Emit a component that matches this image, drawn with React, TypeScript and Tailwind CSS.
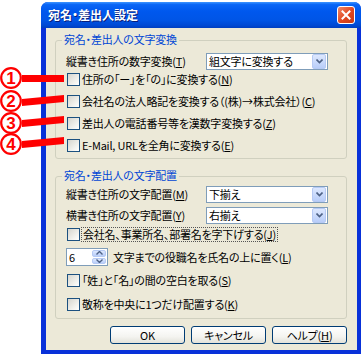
import React from "react";

const M = ({ k }: { k: string }) => (
  <span>
    (<span className="underline underline-offset-[1px]">{k}</span>)
  </span>
);

const CheckBox = () => (
  <div className="w-[13px] h-[13px] shrink-0 border border-[#1C5180] bg-[linear-gradient(135deg,#d6d5ce_0%,#f4f4f0_70%,#ffffff_100%)]" />
);

const Chevron = () => (
  <svg width="7" height="5" viewBox="0 0 7 5">
    <path d="M0.5 0.5 L3.5 3.5 L6.5 0.5" fill="none" stroke="#4D6185" strokeWidth="1.6" />
  </svg>
);

const Select = ({ value }: { value: string }) => (
  <div className="w-[122px] h-[17px] border border-[#7F9DB9] bg-white flex items-center">
    <span className="flex-1 pl-[2px] leading-[13px]">{value}</span>
    <div className="w-[14px] h-[15px] mr-px rounded-[2px] border border-[#B6CAF4] bg-[linear-gradient(180deg,#dde8fe,#b8cdf9)] flex items-center justify-center">
      <Chevron />
    </div>
  </div>
);

const CheckRow = ({ children, focus }: { children: React.ReactNode; focus?: boolean }) => (
  <div className="h-[13px] flex items-center pl-[11px]">
    <CheckBox />
    <span
      className={
        "ml-[2px] leading-[13px] whitespace-nowrap " +
        (focus ? "outline outline-1 outline-dotted outline-[#555] outline-offset-0 px-px" : "")
      }
    >
      {children}
    </span>
  </div>
);

const Group = ({ legend, children, cls }: { legend: string; children: React.ReactNode; cls: string }) => (
  <div className={"relative ml-[9px] mr-[10px] border border-[#D0D0BF] rounded-[3px] " + cls}>
    <span className="absolute -top-[9px] left-[6px] px-[2px] bg-[#ECE9D8] text-[#0046D5] leading-[14px]">
      {legend}
    </span>
    {children}
  </div>
);

const Button = ({ children }: { children: React.ReactNode }) => (
  <div className="w-[75px] h-[18px] shrink-0 rounded-[3px] border border-[#003C74] bg-[linear-gradient(180deg,#ffffff_0%,#f4f4f0_60%,#e3e2da_100%)] flex items-center justify-center leading-[13px]">
    {children}
  </div>
);

export default function App() {
  return (
    <div className="relative w-[362px] h-[355px] bg-white overflow-hidden pt-[2px] font-['Noto_Sans_CJK_JP','Liberation_Sans',sans-serif] text-[11px] tracking-[-0.2px] text-black [font-feature-settings:'palt']">
      {/* window */}
      <div className="ml-[41px] w-[320px] h-[352px] rounded-t-[7px] bg-[#0831D9] flex flex-col overflow-hidden">
        {/* title bar */}
        <div className="h-[26px] shrink-0 flex items-center bg-[linear-gradient(180deg,#3d95ff_0%,#0a66f6_10%,#0058ee_35%,#0055e6_70%,#0049d3_90%,#003fc0_100%)]">
          <span className="ml-[7px] text-white font-bold text-[12px] tracking-normal leading-[14px] [text-shadow:1px_1px_0_#0a1e78]">
            宛名・差出人設定
          </span>
          <div className="ml-auto mr-[6px] w-[18px] h-[18px] rounded-[3px] border border-white bg-[linear-gradient(135deg,#f08a6a,#e0461f_55%,#c73a16)] flex items-center justify-center">
            <svg width="10" height="10" viewBox="0 0 10 10">
              <path d="M1.5 1.5 L8.5 8.5 M8.5 1.5 L1.5 8.5" stroke="white" strokeWidth="2" strokeLinecap="square" />
            </svg>
          </div>
        </div>
        {/* body */}
        <div className="ml-[5px] mr-[4px] mb-[4px] flex-1 bg-[#ECE9D8] flex flex-col">
          <Group legend="宛名・差出人の文字変換" cls="mt-[12px] pt-[12px] pb-[6px]">
            <div className="h-[17px] flex items-center">
              <span className="pl-[10px] w-[150px] whitespace-nowrap leading-[13px]">
                縦書き住所の数字変換<M k="T" />
              </span>
              <Select value="組文字に変換する" />
            </div>
            <div className="mt-[3px] flex flex-col gap-[9px]">
              <CheckRow>
                住所の「ー」を「の」に変換する<M k="N" />
              </CheckRow>
              <CheckRow>
                会社名の法人略記を変換する（(株)→株式会社）<M k="C" />
              </CheckRow>
              <CheckRow>
                差出人の電話番号等を漢数字変換する<M k="Z" />
              </CheckRow>
              <CheckRow>
                E-Mail, URLを全角に変換する<M k="E" />
              </CheckRow>
            </div>
          </Group>

          <Group legend="宛名・差出人の文字配置" cls="mt-[17px] pt-[9px] pb-[7px]">
            <div className="flex flex-col gap-[4px]">
              <div className="h-[17px] flex items-center">
                <span className="pl-[10px] w-[150px] whitespace-nowrap leading-[13px]">
                  縦書き住所の文字配置<M k="M" />
                </span>
                <Select value="下揃え" />
              </div>
              <div className="h-[17px] flex items-center">
                <span className="pl-[10px] w-[150px] whitespace-nowrap leading-[13px]">
                  横書き住所の文字配置<M k="Y" />
                </span>
                <Select value="右揃え" />
              </div>
            </div>
            <div className="mt-[4px]">
              <CheckRow focus>
                会社名、事業所名、部署名を字下げする<M k="J" />
              </CheckRow>
            </div>
            <div className="mt-[7px] h-[18px] flex items-center pl-[10px]">
              <div className="w-[42px] h-[18px] border border-[#7F9DB9] bg-white flex">
                <span className="flex-1 pl-[2px] leading-[16px]">6</span>
                <div className="w-[14px] flex flex-col gap-px py-px mr-px">
                  <div className="flex-1 rounded-[2px] bg-[linear-gradient(180deg,#dde8fe,#b8cdf9)] border border-[#B6CAF4] flex items-center justify-center">
                    <svg width="7" height="4" viewBox="0 0 7 4">
                      <path d="M0.5 3.5 L3.5 0.5 L6.5 3.5" fill="none" stroke="#4D6185" strokeWidth="1.4" />
                    </svg>
                  </div>
                  <div className="flex-1 rounded-[2px] bg-[linear-gradient(180deg,#dde8fe,#b8cdf9)] border border-[#B6CAF4] flex items-center justify-center">
                    <svg width="7" height="4" viewBox="0 0 7 4">
                      <path d="M0.5 0.5 L3.5 3.5 L6.5 0.5" fill="none" stroke="#4D6185" strokeWidth="1.4" />
                    </svg>
                  </div>
                </div>
              </div>
              <span className="ml-[5px] leading-[13px] whitespace-nowrap">
                文字までの役職名を氏名の上に置く<M k="L" />
              </span>
            </div>
            <div className="mt-[8px]">
              <CheckRow>
                「姓」と「名」の間の空白を取る<M k="S" />
              </CheckRow>
            </div>
            <div className="mt-[11px]">
              <CheckRow>
                敬称を中央に1つだけ配置する<M k="K" />
              </CheckRow>
            </div>
          </Group>

          <div className="mt-[7px] flex justify-end gap-[6px] pr-[10px]">
            <Button>OK</Button>
            <Button>キャンセル</Button>
            <Button>
              ヘルプ<M k="H" />
            </Button>
          </div>
        </div>
      </div>

      {/* annotations */}
      <svg className="absolute left-0 top-0" width="70" height="160" viewBox="0 0 70 160">
        <g fill="#ff0000">
          <polygon points="22,75 64,75 64,82 22,82" />
          <polygon points="22,99 64,95 64,102 22,106" />
          <polygon points="22,120 64,116 64,123 22,127" />
          <polygon points="22,141 64,137 64,144 22,148" />
        </g>
        {[
          [11, 78, "1"],
          [11, 101, "2"],
          [11, 123, "3"],
          [11, 144, "4"],
        ].map(([cx, cy, t]) => (
          <g key={t as string}>
            <circle cx={cx as number} cy={cy as number} r="9.8" fill="white" stroke="#ff0000" strokeWidth="2.2" />
            <text
              x={cx as number}
              y={(cy as number) + 6}
              textAnchor="middle"
              fontFamily="Liberation Sans, Arial, sans-serif"
              fontWeight="bold"
              fontSize="17"
              fill="#ff0000"
            >
              {t}
            </text>
          </g>
        ))}
      </svg>
    </div>
  );
}
